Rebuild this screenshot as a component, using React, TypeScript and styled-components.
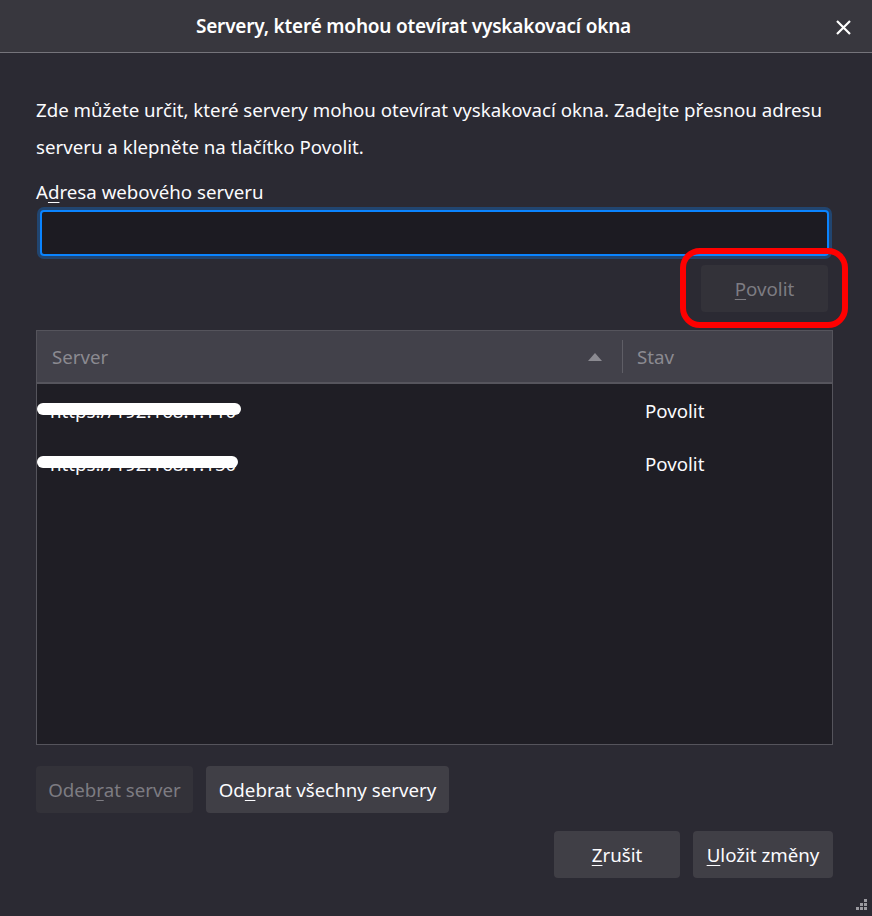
import React from "react";
import styled, { createGlobalStyle } from "styled-components";

const Global = createGlobalStyle`
  html, body { margin: 0; padding: 0; background: #2b2a33; }
  body { font-family: "Noto Sans", "Open Sans", sans-serif; color: #fbfbfe; }
  * { box-sizing: border-box; }
`;

const Window = styled.div`
  width: 872px;
  height: 916px;
  background: #2b2a33;
  display: flex;
  flex-direction: column;
  position: relative;
  overflow: hidden;
`;

const TitleBar = styled.div`
  height: 53px;
  flex: none;
  background: #38373e;
  border-bottom: 1px solid #75747b;
  display: flex;
  align-items: center;
  justify-content: center;
  padding-right: 45px;
  position: relative;
`;

const Title = styled.h1`
  margin: 0;
  font-size: 19px;
  font-weight: 600;
  letter-spacing: -0.2px;
  color: #ffffff;
`;

const CloseButton = styled.button`
  position: absolute;
  right: 20px;
  top: 18px;
  width: 18px;
  height: 18px;
  padding: 0;
  border: none;
  background: transparent;
  display: flex;
  align-items: center;
  justify-content: center;
`;

const Content = styled.div`
  flex: 1;
  display: flex;
  flex-direction: column;
  padding: 38px 39px 0 36px;
`;

const Description = styled.p`
  margin: 0;
  font-size: 18.7px;
  line-height: 37px;
  color: #fbfbfe;
`;

const Label = styled.label`
  margin-top: 16px;
  font-size: 18.7px;
  line-height: 22px;
  color: #fbfbfe;
`;

const AddressInput = styled.div`
  margin: 7px 4px 0 4px;
  height: 46px;
  background: #1c1b22;
  border: 2px solid #0a84ff;
  border-radius: 4px;
  box-shadow: 0 0 0 3px rgba(10, 132, 255, 0.3);
`;

const AllowRow = styled.div`
  display: flex;
  justify-content: flex-end;
  margin-top: 9px;
  padding-right: 5px;
`;

const Highlighted = styled.div`
  position: relative;
`;

const RedMark = styled.div`
  position: absolute;
  left: -21px;
  right: -20px;
  top: -17px;
  bottom: -16px;
  border: 6px solid #ff0000;
  border-radius: 20px;
  pointer-events: none;
`;

const Button = styled.button<{ $disabled?: boolean; $w: number }>`
  width: ${(p) => p.$w}px;
  height: 47px;
  border: none;
  border-radius: 4px;
  font-family: inherit;
  font-size: 18.7px;
  padding: 0;
  background: ${(p) => (p.$disabled ? "#333239" : "#403f46")};
  color: ${(p) => (p.$disabled ? "#7d7c82" : "#fbfbfe")};
  display: flex;
  align-items: center;
  justify-content: center;
`;

const Tree = styled.div`
  margin-top: 18px;
  height: 415px;
  border: 1px solid #55545c;
  background: #1f1e25;
  display: flex;
  flex-direction: column;
`;

const Header = styled.div`
  height: 53px;
  flex: none;
  background: #42414a;
  border-bottom: 2px solid #56555d;
  display: grid;
  grid-template-columns: 585px 1fr;
  align-items: stretch;
`;

const HeaderCell = styled.div<{ $divider?: boolean }>`
  display: flex;
  align-items: center;
  justify-content: space-between;
  padding: 0 ${(p) => (p.$divider ? "0" : "20px")} 0 15px;
  font-size: 18.7px;
  color: #8b8a91;
  position: relative;
  ${(p) =>
    p.$divider
      ? `&::before { content: ""; position: absolute; left: 0; top: 9px; bottom: 9px; width: 1px; background: #5f5e66; }`
      : ""}
`;

const Row = styled.div`
  height: 53px;
  display: grid;
  grid-template-columns: 585px 1fr;
  align-items: center;
  font-size: 18.7px;
  color: #fbfbfe;
`;

const ServerCell = styled.div`
  position: relative;
  padding-left: 13px;
  color: #fbfbfe;
`;

const Scribble = styled.div`
  position: absolute;
  left: 0;
  top: 50%;
  margin-top: -8px;
  height: 12px;
  border-radius: 6px;
  background: #ffffff;
`;

const StateCell = styled.div`
  padding-left: 23px;
`;

const ButtonRow = styled.div<{ $end?: boolean; $top: number }>`
  display: flex;
  gap: 13px;
  margin-top: ${(p) => p.$top}px;
  justify-content: ${(p) => (p.$end ? "flex-end" : "flex-start")};
`;

const Grip = styled.svg`
  position: absolute;
  right: 4px;
  bottom: 4px;
`;

const U = styled.span`
  text-decoration: underline;
  text-underline-offset: 3px;
  text-decoration-thickness: 1px;
`;

const rows = [
  { server: "https://192.168.1.110", w: 204 },
  { server: "https://192.168.1.150", w: 201 },
];

export default function App() {
  return (
    <>
      <Global />
      <Window>
        <TitleBar>
          <Title>Servery, které mohou otevírat vyskakovací okna</Title>
          <CloseButton aria-label="Zavřít">
            <svg width="15" height="15" viewBox="0 0 15 15">
              <path d="M1 1 L14 14 M14 1 L1 14" stroke="#ffffff" strokeWidth="2.2" strokeLinecap="butt" />
            </svg>
          </CloseButton>
        </TitleBar>
        <Content>
          <Description>
            Zde můžete určit, které servery mohou otevírat vyskakovací okna. Zadejte přesnou adresu serveru a
            klepněte na tlačítko Povolit.
          </Description>
          <Label>
            A<U>d</U>resa webového serveru
          </Label>
          <AddressInput />
          <AllowRow>
            <Highlighted>
              <Button $disabled $w={127}>
                <span>
                  <U>P</U>ovolit
                </span>
              </Button>
              <RedMark />
            </Highlighted>
          </AllowRow>
          <Tree>
            <Header>
              <HeaderCell>
                <span>Server</span>
                <svg width="14" height="8" viewBox="0 0 14 8">
                  <path d="M0 8 L7 0 L14 8 Z" fill="#8b8a91" />
                </svg>
              </HeaderCell>
              <HeaderCell $divider>
                <span>Stav</span>
              </HeaderCell>
            </Header>
            {rows.map((r) => (
              <Row key={r.server}>
                <ServerCell>
                  {r.server}
                  <Scribble style={{ width: r.w }} />
                </ServerCell>
                <StateCell>Povolit</StateCell>
              </Row>
            ))}
          </Tree>
          <ButtonRow $top={21}>
            <Button $disabled $w={157}>
              <span>
                Odeb<U>r</U>at server
              </span>
            </Button>
            <Button $w={243}>
              <span>
                Od<U>e</U>brat všechny servery
              </span>
            </Button>
          </ButtonRow>
          <ButtonRow $end $top={18}>
            <Button $w={126}>
              <span>
                <U>Z</U>rušit
              </span>
            </Button>
            <Button $w={140}>
              <span>
                <U>U</U>ložit změny
              </span>
            </Button>
          </ButtonRow>
        </Content>
        <Grip width="13" height="13" viewBox="0 0 13 13">
          <g fill="#9b9aa0">
            <rect x="9" y="0" width="3" height="3" />
            <rect x="5" y="4" width="3" height="3" />
            <rect x="9" y="4" width="3" height="3" />
            <rect x="1" y="8" width="3" height="3" />
            <rect x="5" y="8" width="3" height="3" />
            <rect x="9" y="8" width="3" height="3" />
          </g>
        </Grip>
      </Window>
    </>
  );
}
